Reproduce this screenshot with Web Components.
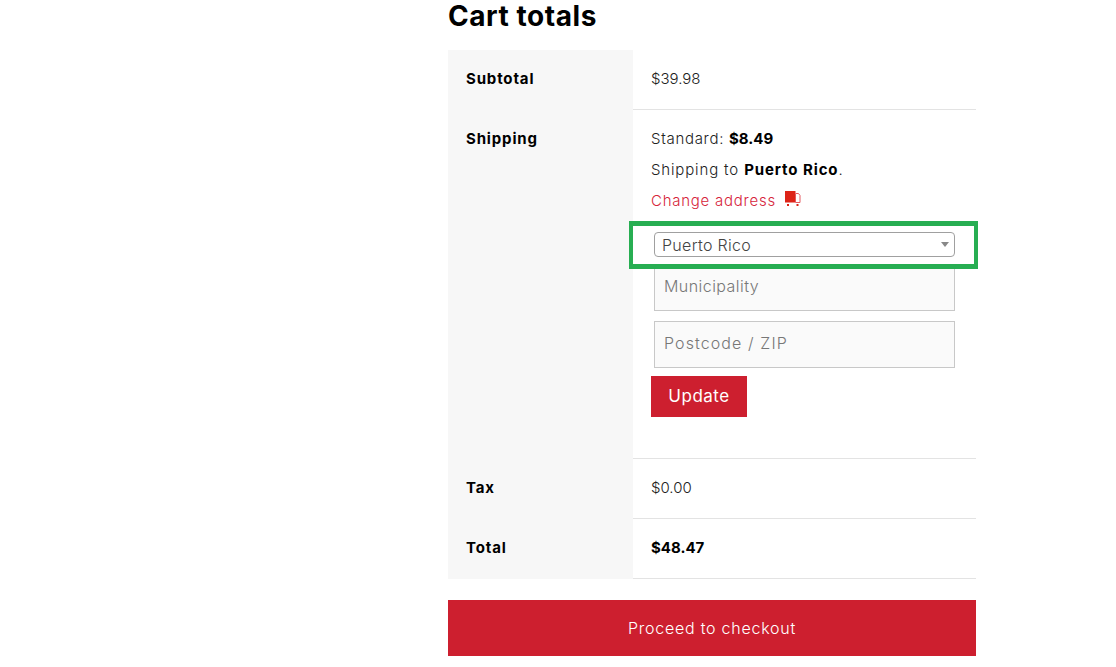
<!DOCTYPE html>
<html lang="en">
<head>
<meta charset="utf-8">
<title>Cart totals</title>
<style>
  html, body { margin: 0; background: #fff; }
  body {
    font-family: "Inter", "Noto Sans", "Liberation Sans", sans-serif;
    color: #222;
    overflow: hidden;
    height: 667px;
  }
  strong { font-weight: 700; color: #000; }
</style>
</head>
<body>
<cart-totals>
  <totals-row label="Subtotal">$39.98</totals-row>
  <totals-row label="Shipping">
    <shipping-panel></shipping-panel>
  </totals-row>
  <totals-row label="Tax">$0.00</totals-row>
  <totals-row label="Total"><strong>$48.47</strong></totals-row>
</cart-totals>

<script>
class CartTotals extends HTMLElement {
  constructor() {
    super();
    this.attachShadow({ mode: 'open' });
  }

  connectedCallback() {
    this.shadowRoot.innerHTML = `
      <style>
        :host { display: block; width: 528px; margin-left: 448px; }
        h2 {
          margin: 0;
          height: 50px;
          font-size: 28px;
          line-height: 32px;
          font-weight: 700;
          letter-spacing: 0.55px;
          color: #000;
        }
        .checkout {
          display: block;
          margin-top: 21px;
          height: 56px;
          line-height: 56px;
          text-align: center;
          background: #cd1f2f;
          color: #fff;
          font-size: 16px;
          font-weight: 300;
          letter-spacing: 0.75px;
        }
      </style>
      <h2>Cart totals</h2>
      <slot></slot>
      <a class="checkout">Proceed to checkout</a>
    `;
  }
}

class TotalsRow extends HTMLElement {
  constructor() {
    super();
    this.attachShadow({ mode: 'open' });
  }

  connectedCallback() {
    this.shadowRoot.innerHTML = `
      <style>
        :host {
          display: grid;
          grid-template-columns: 185px 1fr;
          font-size: 15px;
          line-height: 23px;
        }
        .label {
          background: #f7f7f7;
          padding: 17px 18px 19px;
          font-weight: 700;
          letter-spacing: 0.85px;
          color: #000;
        }
        .value {
          padding: 17px 18px 19px;
          border-bottom: 1px solid #e3e3e3;
          font-weight: 300;
          min-width: 0;
        }
      </style>
      <div class="label">${this.getAttribute('label')}</div>
      <div class="value"><slot></slot></div>
    `;
  }
}

class TruckIcon extends HTMLElement {
  constructor() {
    super();
    this.attachShadow({ mode: 'open' });
  }

  connectedCallback() {
    this.shadowRoot.innerHTML = `
      <style>
        :host { display: inline-block; width: 16px; height: 16px; line-height: 0; }
      </style>
      <svg width="16" height="16" viewBox="0 0 16 16">
        <rect x="0" y="0" width="10.5" height="11.5" fill="#dd2418"/>
        <path d="M10.5 2.500h3l1.500 2v7h-4.500z" fill="#fff" stroke="#e45a60" stroke-width="1"/>
        <rect x="2" y="13" width="2" height="2" fill="#dd2418"/>
        <rect x="11.500" y="13" width="2" height="2" fill="#dd2418"/>
      </svg>
    `;
  }
}

class ShippingPanel extends HTMLElement {
  constructor() {
    super();
    this.attachShadow({ mode: 'open' });
  }

  connectedCallback() {
    this.shadowRoot.innerHTML = `
      <style>
        :host { display: block; position: relative; height: 312px; }
        p { margin: 0 0 8px; color: #222; letter-spacing: 0.7px; }
        p.to { letter-spacing: 0.85px; }
        strong { font-weight: 700; color: #000; }
        .price { letter-spacing: 0; }
        .place { letter-spacing: 0.9px; }
        .change {
          display: flex;
          align-items: flex-start;
          gap: 9px;
          height: 23px;
          color: #d6243a;
          letter-spacing: 0.75px;
        }
        .change truck-icon { margin-top: 2px; }
        .fields { display: flex; flex-direction: column; padding: 0 3px; margin-top: 20px; font-size: 16px; }
        .select {
          height: 25px;
          box-sizing: border-box;
          border: 1px solid #a0a0a0;
          border-radius: 4px;
          padding: 0 7px;
          line-height: 25px;
          color: #444;
          letter-spacing: 0.3px;
          position: relative;
        }
        .select::after {
          content: "";
          position: absolute;
          right: 5px;
          top: 9px;
          border: 4px solid transparent;
          border-top: 5px solid #888;
          border-bottom: 0;
        }
        input {
          display: block;
          width: 100%;
          height: 47px;
          box-sizing: border-box;
          margin-top: 10px;
          padding: 0 9px 4px;
          background: #fafafa;
          border: 1px solid #c8c8c8;
          font: inherit;
          color: #444;
          letter-spacing: 0.45px;
        }
        .select + input { margin-top: 7px; }
        input.zip { letter-spacing: 1.1px; }
        input::placeholder { color: #777; opacity: 1; }
        button {
          display: block;
          margin-top: 8px;
          width: 96px;
          height: 41px;
          padding: 0;
          border: 0;
          background: #cd1f2f;
          color: #fff;
          font: inherit;
          font-size: 17px;
          font-weight: 400;
          letter-spacing: 0.5px;
        }
        .highlight {
          position: absolute;
          left: -22px;
          top: 94px;
          width: 349px;
          height: 48px;
          box-sizing: border-box;
          border: 5px solid #27ae52;
          border-left-width: 4px;
          border-right-width: 4px;
          pointer-events: none;
        }
      </style>
      <p>Standard: <strong class="price">$8.49</strong></p>
      <p class="to">Shipping to <strong class="place">Puerto Rico</strong>.</p>
      <div class="change">Change address <truck-icon></truck-icon></div>
      <div class="fields">
        <div class="select">Puerto Rico</div>
        <input placeholder="Municipality">
        <input class="zip" placeholder="Postcode / ZIP">
      </div>
      <button>Update</button>
      <div class="highlight"></div>
    `;
  }
}

customElements.define('cart-totals', CartTotals);
customElements.define('totals-row', TotalsRow);
customElements.define('truck-icon', TruckIcon);
customElements.define('shipping-panel', ShippingPanel);
</script>
</body>
</html>
